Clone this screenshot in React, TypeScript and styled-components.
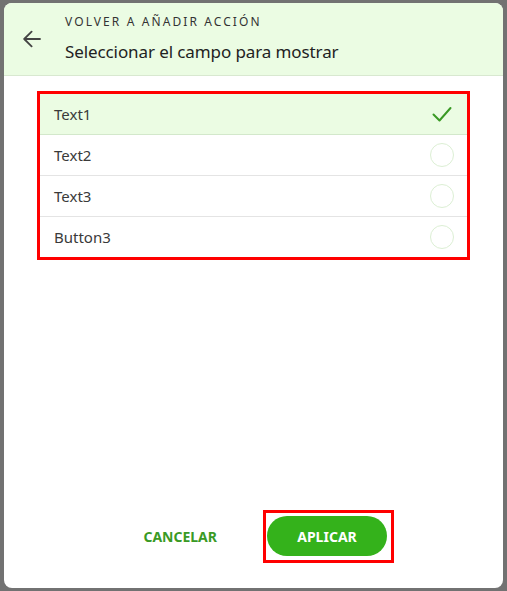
import styled, { createGlobalStyle } from "styled-components";

const fields = ["Text1", "Text2", "Text3", "Button3"];

const App = () => {
  const selected = "Text1";

  return (
    <>
      <GlobalStyle />
      <Dialog>
        <Header>
          <BackButton aria-label="Volver">
            <svg width="18" height="18" viewBox="0 0 18 18" fill="none">
              <path
                d="M17 9H1.8M8.6 1.6 1.2 9l7.4 7.4"
                stroke="#444"
                strokeWidth="1.8"
                strokeLinecap="round"
                strokeLinejoin="round"
              />
            </svg>
          </BackButton>
          <HeaderText>
            <Overline>VOLVER A AÑADIR ACCIÓN</Overline>
            <Title>Seleccionar el campo para mostrar</Title>
          </HeaderText>
        </Header>
        <Body>
          <List>
            {fields.map((name) => (
              <Row key={name} $selected={name === selected}>
                <RowLabel>{name}</RowLabel>
                {name === selected ? (
                  <Check width="24" height="24" viewBox="0 0 24 24" fill="none">
                    <path
                      d="M3.5 12.5l6 6L20.5 6"
                      stroke="#3a9a25"
                      strokeWidth="2"
                      strokeLinecap="round"
                      strokeLinejoin="round"
                    />
                  </Check>
                ) : (
                  <Radio />
                )}
              </Row>
            ))}
          </List>
        </Body>
        <Footer>
          <TextButton>CANCELAR</TextButton>
          <Highlight>
            <PrimaryButton>APLICAR</PrimaryButton>
          </Highlight>
        </Footer>
      </Dialog>
    </>
  );
};

const GlobalStyle = createGlobalStyle`
  body {
    margin: 0;
    background: #727272;
    font-family: "Noto Sans", "Open Sans", sans-serif;
  }
`;

const Dialog = styled.div`
  width: 499px;
  height: 585px;
  margin: 3px 0 0 4px;
  background: #ffffff;
  border-radius: 8px;
  overflow: hidden;
  display: flex;
  flex-direction: column;
`;

const Header = styled.header`
  display: flex;
  align-items: flex-start;
  height: 72px;
  background: #ebfce3;
  border-bottom: 1px solid #d8e8d0;
`;

const BackButton = styled.button`
  width: 61px;
  height: 72px;
  padding: 0 0 0 19px;
  border: none;
  background: none;
  display: flex;
  align-items: center;
  justify-content: flex-start;
`;

const HeaderText = styled.div`
  display: flex;
  flex-direction: column;
  gap: 11px;
  padding-top: 11px;
`;

const Overline = styled.div`
  font-size: 12px;
  letter-spacing: 2.1px;
  color: #333;
  line-height: 16px;
`;

const Title = styled.h1`
  margin: 0;
  font-size: 17px;
  font-weight: 400;
  letter-spacing: -0.1px;
  color: #222;
  line-height: 22px;
`;

const Body = styled.main`
  flex: 1;
  padding: 15px 33px 0;
`;

const List = styled.ul`
  list-style: none;
  margin: 0;
  padding: 0;
  border: 3px solid #ff0000;
`;

const Row = styled.li<{ $selected?: boolean }>`
  display: flex;
  align-items: center;
  justify-content: space-between;
  height: 40px;
  padding: 0 13px 0 14px;
  background: ${(p) => (p.$selected ? "#ebfce3" : "#ffffff")};
  border-bottom: 1px solid ${(p) => (p.$selected ? "#d3e8cb" : "#e4e4e4")};

  &:last-child {
    border-bottom: none;
  }
`;

const RowLabel = styled.span`
  font-size: 15px;
  color: #3a3a3a;
`;

const Check = styled.svg`
  display: block;
`;

const Radio = styled.span`
  width: 24px;
  height: 24px;
  box-sizing: border-box;
  border-radius: 50%;
  border: 1px solid #dcefd4;
`;

const Footer = styled.footer`
  display: flex;
  align-items: center;
  justify-content: flex-end;
  gap: 32px;
  padding: 0 109px 25px 0;
`;

const TextButton = styled.button`
  border: none;
  background: none;
  padding: 10px 14px;
  font-family: inherit;
  font-size: 14px;
  font-weight: 700;
  color: #3a9a25;
`;

const Highlight = styled.div`
  border: 3px solid #ff0000;
  padding: 3px 4px 4px 1px;
`;

const PrimaryButton = styled.button`
  width: 120px;
  height: 40px;
  border: none;
  border-radius: 20px;
  background: #34b21b;
  color: #ffffff;
  font-family: inherit;
  font-size: 14px;
  font-weight: 700;
`;

export default App;
